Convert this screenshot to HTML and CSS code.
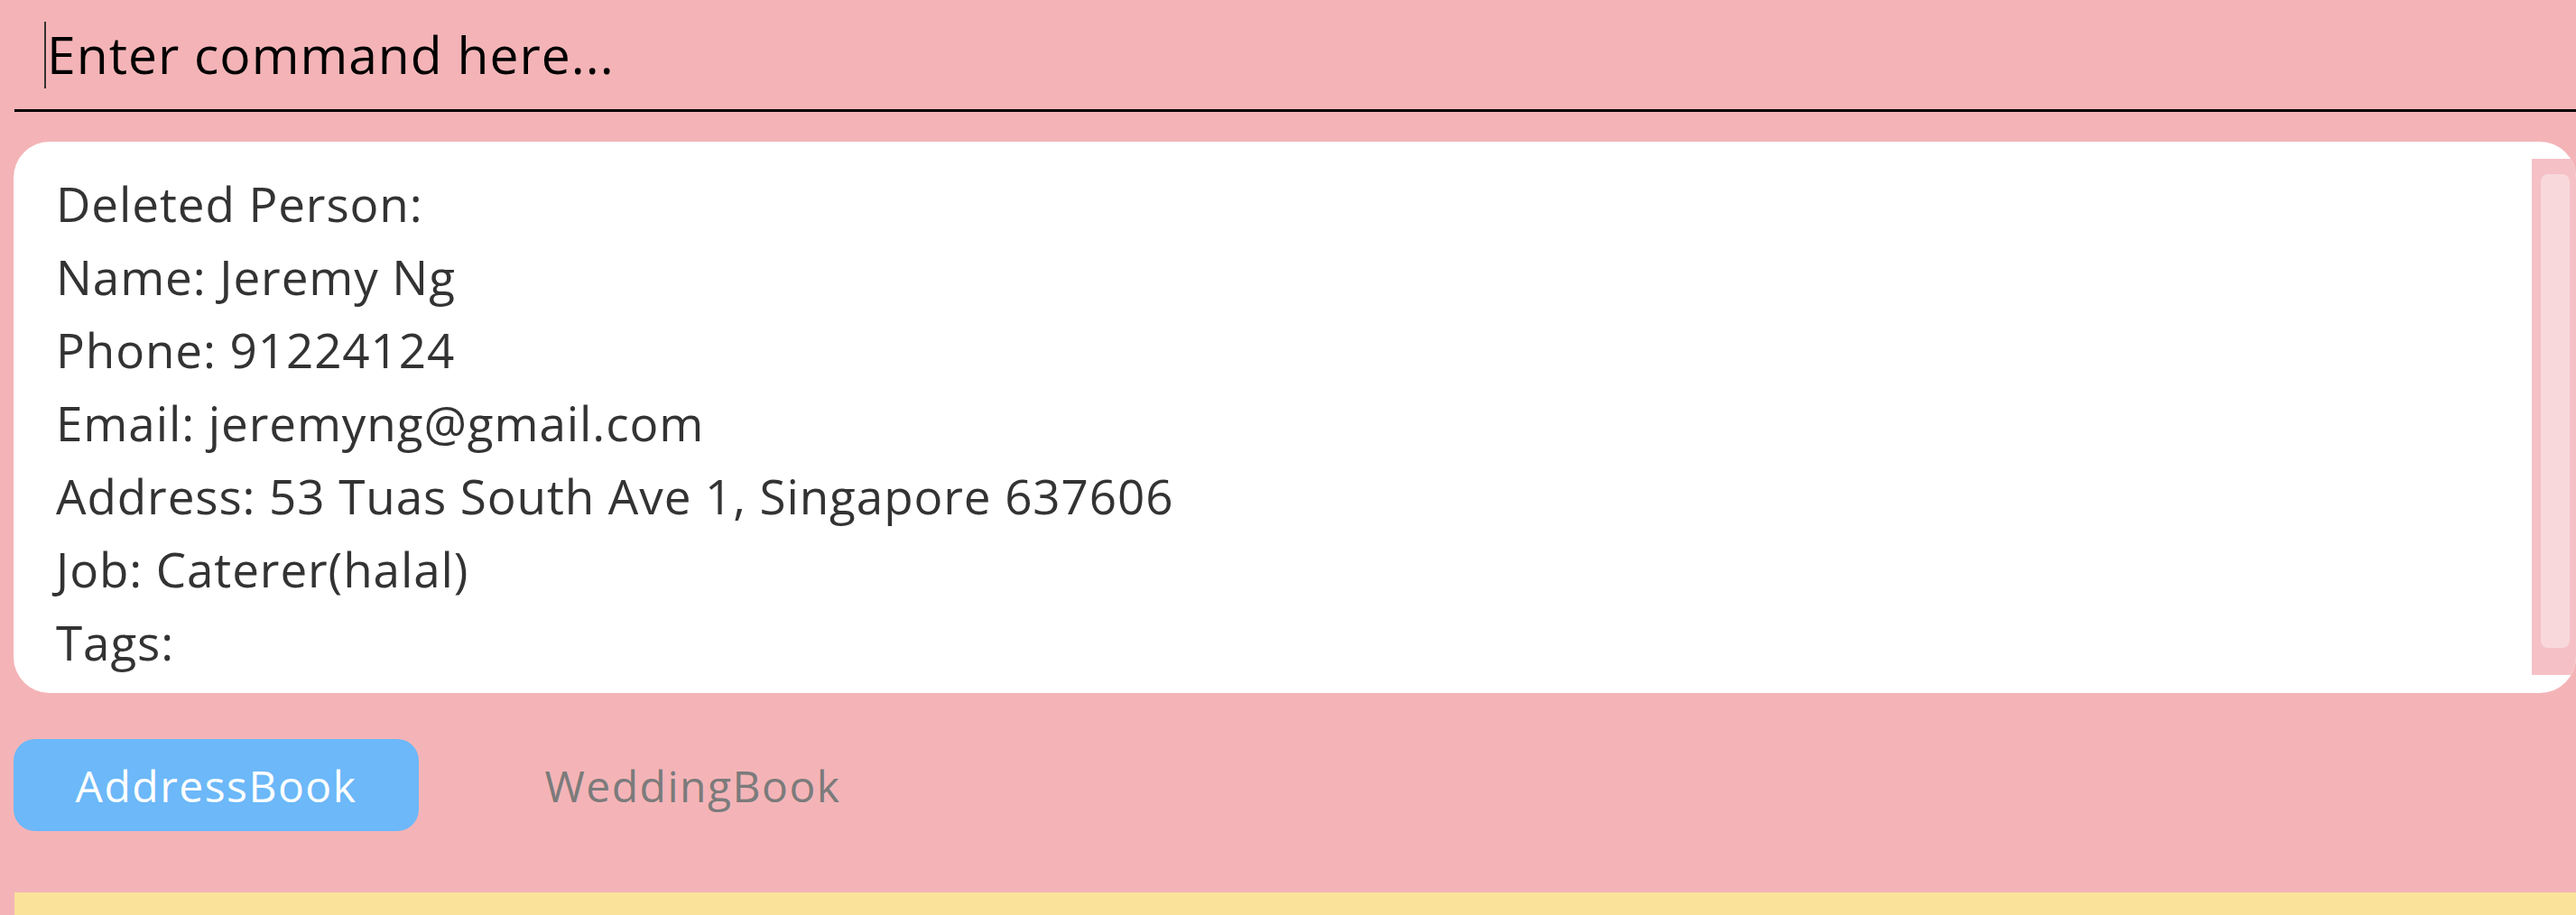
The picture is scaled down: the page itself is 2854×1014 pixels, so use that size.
FILE: index.html
```html
<!DOCTYPE html>
<html lang="en">
<head>
<meta charset="utf-8">
<title>AddressBook</title>
<link rel="stylesheet" href="styles.css">
</head>
<body>
<div class="app">
  <div class="command">
    <span class="caret"></span>
    <span class="placeholder">Enter command here...</span>
  </div>
  <div class="result">
    <div class="result-text">
      <div class="line">Deleted Person:</div>
      <div class="line">Name: Jeremy Ng</div>
      <div class="line">Phone: 91224124</div>
      <div class="line">Email: jeremyng@gmail.com</div>
      <div class="line">Address: 53 Tuas South Ave 1, Singapore 637606</div>
      <div class="line">Job: Caterer(halal)</div>
      <div class="line">Tags:</div>
    </div>
    <div class="scroll-track"><div class="scroll-thumb"></div></div>
  </div>
  <div class="tabs">
    <div class="tab tab-active">AddressBook</div>
    <div class="tab">WeddingBook</div>
  </div>
  <div class="status"></div>
</div>
</body>
</html>
```
FILE: styles.css
```css
html, body {
  margin: 0;
  padding: 0;
  background: #f4b4b7;
  height: 100%;
  overflow: hidden;
}
.app {
  display: flex;
  flex-direction: column;
  font-family: "Open Sans", "Noto Sans", sans-serif;
}
.command {
  margin-left: 16px;
  height: 121px;
  border-bottom: 3px solid #000;
  display: flex;
  align-items: center;
  padding-left: 33px;
}
.caret {
  display: inline-block;
  width: 2px;
  height: 74px;
  background: #333;
  margin-right: 1px;
}
.placeholder {
  font-size: 57px;
  letter-spacing: 1px;
  color: #000;
  line-height: 1;
}
.result {
  margin-top: 33px;
  margin-left: 15px;
  height: 611px;
  background: #fff;
  border-radius: 40px;
  display: flex;
  overflow: hidden;
}
.result-text {
  flex: 1;
  padding: 28px 0 0 47px;
  font-size: 53px;
  letter-spacing: 0.9px;
  line-height: 81px;
  color: #333;
}
.scroll-track {
  width: 49px;
  margin: 19px 0 20px 0;
  background: #f5c1c6;
  padding: 17px 7px 30px 10px;
  box-sizing: border-box;
  display: flex;
}
.scroll-thumb {
  flex: 1;
  background: #f8d8db;
  border-radius: 8px;
}
.tabs {
  margin-top: 51px;
  margin-left: 15px;
  display: flex;
  gap: 79px;
}
.tab {
  width: 449px;
  height: 102px;
  border-radius: 24px;
  display: flex;
  align-items: center;
  justify-content: center;
  font-size: 48px;
  letter-spacing: 1.5px;
  color: #7b7b7b;
}
.tab-active {
  background: #6cb8f8;
  color: #fff;
}
.status {
  margin-top: 68px;
  margin-left: 16px;
  height: 40px;
  background: #fae29b;
}
```
